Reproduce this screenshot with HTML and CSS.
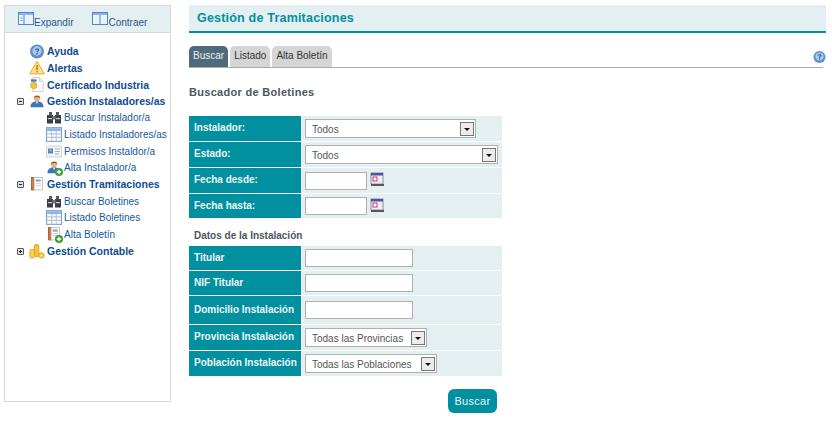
FILE: index.html
```html
<!DOCTYPE html>
<html lang="es">
<head>
<meta charset="utf-8">
<title>Gestión de Tramitaciones</title>
<link rel="stylesheet" href="styles.css">
</head>
<body>
<svg class="defs" width="0" height="0" aria-hidden="true">
  <defs>
    <symbol id="i-help" viewBox="0 0 14 14"><circle cx="7" cy="7" r="6.5" fill="#5d8fc9"/><circle cx="7" cy="6.5" r="4.4" fill="#a9c8ea"/><path d="M5 5.3c.3-1.6 4-1.6 4 .2 0 1.2-1.6 1.2-1.6 2.3H6.4c0-1.6 1.4-1.5 1.4-2.3 0-.6-1.3-.6-1.6 0z" fill="#2b5c9e"/><rect x="6.4" y="8.5" width="1.3" height="1.3" fill="#2b5c9e"/></symbol>
    <symbol id="i-alert" viewBox="0 0 16 14"><path d="M8 .8 15.4 13.4H.6z" fill="#ffe28a" stroke="#e9a83a"/><rect x="7.2" y="4.5" width="1.6" height="5" fill="#c9831c"/><rect x="7.2" y="10.3" width="1.6" height="1.6" fill="#c9831c"/></symbol>
    <symbol id="i-cert" viewBox="0 0 14 16"><path d="M2.500.5h7l4 4v11h-11z" fill="#fbfbfb" stroke="#cfcfcf"/><path d="M9.500.5v4h4" fill="#eee" stroke="#cfcfcf"/><rect x=".5" y="2.500" width="6" height="2.500" fill="#3d7ab8"/><circle cx="3.500" cy="9" r="3.400" fill="#f3c33c" stroke="#c8922a" stroke-width=".6"/></symbol>
    <symbol id="i-user" viewBox="0 0 16 16"><circle cx="8" cy="4.500" r="3.300" fill="#e9b184"/><path d="M4.600 4.200C4.700 1 11.300 1 11.400 4.200 9.500 3 6.500 3 4.600 4.200z" fill="#9c4f1f"/><path d="M1 14c0-4 3-6.200 7-6.200S15 10 15 14z" fill="#3a75c0"/><path d="M6.500 8h3L8 11z" fill="#f4d9c3"/></symbol>
    <symbol id="i-bino" viewBox="0 0 16 13"><rect x="1" y="4" width="6" height="8.500" fill="#3a3d42"/><rect x="9" y="4" width="6" height="8.500" fill="#3a3d42"/><rect x="3" y="1" width="3" height="3.500" fill="#55585e"/><rect x="10" y="1" width="3" height="3.500" fill="#55585e"/><rect x="6.500" y="5" width="3" height="3.500" fill="#777"/><rect x="2" y="7" width="4" height="1.200" fill="#c8ccd2"/><rect x="10" y="7" width="4" height="1.200" fill="#c8ccd2"/></symbol>
    <symbol id="i-list" viewBox="0 0 14 13"><rect x=".5" y=".5" width="13" height="12" fill="#fff" stroke="#7ba4d6"/><rect x="1" y="1" width="12" height="2.500" fill="#8db4e4"/><path d="M1 6h12M1 9h12M5 3.500v9M9 3.500v9" stroke="#b9c6d6"/></symbol>
    <symbol id="i-perm" viewBox="0 0 16 12"><rect x=".5" y=".5" width="15" height="11" fill="#f2f4f8" stroke="#d0d4dc"/><rect x="2" y="3" width="5" height="5" fill="#4e86cc"/><rect x="3.500" y="4" width="2" height="2" fill="#e8a070"/><path d="M9 3.500h5M9 6h5M9 8.500h4" stroke="#aab3c0"/></symbol>
    <symbol id="i-book" viewBox="0 0 14 18"><rect x=".5" y=".5" width="3" height="15" fill="#d9703a" stroke="#a84f20"/><rect x="3.500" y=".5" width="10" height="15" fill="#fdfdfd" stroke="#b9b9b9"/><rect x="5.500" y="3" width="6" height="2.500" fill="#7ba4d6"/><path d="M5.500 8h6M5.500 10.500h6" stroke="#c9c9c9"/></symbol>
    <symbol id="i-plus" viewBox="0 0 8 8"><circle cx="4" cy="4" r="4" fill="#3f9a3c"/><path d="M4 1.800v4.400M1.800 4h4.400" stroke="#fff" stroke-width="1.300"/></symbol>
    <symbol id="i-coins" viewBox="0 0 18 17"><rect x="6" y=".5" width="5" height="14" rx="2" fill="#f4c534" stroke="#d79e1e"/><rect x="1" y="6" width="5" height="10" rx="2" fill="#f7d558" stroke="#d79e1e"/><rect x="11" y="10" width="6" height="6" rx="2.500" fill="#f7d558" stroke="#d79e1e"/></symbol>
    <symbol id="i-cal" viewBox="0 0 14 14"><rect x="1" y="1" width="12" height="11" fill="#f1eef3" stroke="#8c8c96"/><rect x="1" y="1" width="12" height="2.500" fill="#4a55a8"/><rect x="3" y="5" width="4" height="4" fill="#fff" stroke="#c8387c"/><rect x="1" y="12" width="13" height="2" fill="#55585c"/></symbol>
    <symbol id="i-panel" viewBox="0 0 16 13"><rect x=".5" y=".5" width="15" height="12" fill="#eaf2fb" stroke="#4f86c6"/><rect x="1" y="1" width="14" height="2" fill="#8db4e4"/><path d="M6 3v9" stroke="#4f86c6"/><path d="M2.500 6h2M2.500 8.500h2" stroke="#8a98a8"/></symbol>
    <symbol id="i-book2" viewBox="0 0 16 13"><rect x=".5" y=".5" width="15" height="12" fill="#eaf2fb" stroke="#4f86c6"/><rect x="1" y="1" width="14" height="2" fill="#8db4e4"/><path d="M8 3v9" stroke="#4f86c6"/></symbol>
  </defs>
</svg>

<div class="page">
  <aside class="side">
    <div class="side-head">
      <a class="head-link"><svg class="ic-panel"><use href="#i-panel"/></svg><span>Expandir</span></a>
      <a class="head-link"><svg class="ic-panel"><use href="#i-book2"/></svg><span>Contraer</span></a>
    </div>
    <ul class="tree">
      <li class="node"><span class="tog"></span><svg class="ic"><use href="#i-help"/></svg><b>Ayuda</b></li>
      <li class="node"><span class="tog"></span><svg class="ic"><use href="#i-alert"/></svg><b>Alertas</b></li>
      <li class="node"><span class="tog"></span><svg class="ic"><use href="#i-cert"/></svg><b>Certificado Industria</b></li>
      <li class="node"><span class="tog minus"></span><svg class="ic"><use href="#i-user"/></svg><b>Gestión Instaladores/as</b></li>
      <li class="leaf"><svg class="ic"><use href="#i-bino"/></svg><span>Buscar Instalador/a</span></li>
      <li class="leaf"><svg class="ic"><use href="#i-list"/></svg><span>Listado Instaladores/as</span></li>
      <li class="leaf"><svg class="ic"><use href="#i-perm"/></svg><span>Permisos Instaldor/a</span></li>
      <li class="leaf"><span class="stack"><svg class="ic"><use href="#i-user"/></svg><svg class="badge"><use href="#i-plus"/></svg></span><span>Alta Instalador/a</span></li>
      <li class="node"><span class="tog minus"></span><svg class="ic"><use href="#i-book"/></svg><b>Gestión Tramitaciones</b></li>
      <li class="leaf"><svg class="ic"><use href="#i-bino"/></svg><span>Buscar Boletines</span></li>
      <li class="leaf"><svg class="ic"><use href="#i-list"/></svg><span>Listado Boletines</span></li>
      <li class="leaf"><span class="stack"><svg class="ic"><use href="#i-book"/></svg><svg class="badge"><use href="#i-plus"/></svg></span><span>Alta Boletín</span></li>
      <li class="node"><span class="tog plus"></span><svg class="ic"><use href="#i-coins"/></svg><b>Gestión Contable</b></li>
    </ul>
  </aside>

  <main class="main">
    <h1 class="title">Gestión de Tramitaciones</h1>
    <div class="tabs">
      <a class="tab active">Buscar</a>
      <a class="tab">Listado</a>
      <a class="tab">Alta Boletín</a>
      <svg class="tabs-help"><use href="#i-help"/></svg>
    </div>
    <h2 class="subtitle">Buscador de Boletines</h2>

    <div class="form">
      <div class="row h26"><label>Instalador:</label><div class="val"><div class="sel w171"><span>Todos</span><i></i></div></div></div>
      <div class="row h26"><label>Estado:</label><div class="val"><div class="sel w193"><span>Todos</span><i></i></div></div></div>
      <div class="row h25"><label>Fecha desde:</label><div class="val"><input class="inp w62" type="text"><svg class="cal"><use href="#i-cal"/></svg></div></div>
      <div class="row h24"><label>Fecha hasta:</label><div class="val"><input class="inp w62" type="text"><svg class="cal"><use href="#i-cal"/></svg></div></div>
    </div>

    <h3 class="section">Datos de la Instalación</h3>

    <div class="form">
      <div class="row h24"><label>Titular</label><div class="val"><input class="inp w108" type="text"></div></div>
      <div class="row h24"><label>NIF Titular</label><div class="val"><input class="inp w108" type="text"></div></div>
      <div class="row h28"><label>Domicilio Instalación</label><div class="val"><input class="inp w108" type="text"></div></div>
      <div class="row h25"><label>Provincia Instalación</label><div class="val"><div class="sel w122"><span>Todas las Provincias</span><i></i></div></div></div>
      <div class="row h25"><label>Población Instalación</label><div class="val"><div class="sel w132"><span>Todas las Poblaciones</span><i></i></div></div></div>
    </div>

    <div class="actions"><button class="btn" type="button">Buscar</button></div>
  </main>
</div>
</body>
</html>
```

FILE: styles.css
```css
* { box-sizing: border-box; }
html, body { margin: 0; padding: 0; background: #fff; }
body { font-family: "Liberation Sans", Arial, sans-serif; font-size: 10px; color: #333; overflow: hidden; }
.defs { display: block; height: 0; }

.page { display: flex; align-items: flex-start; gap: 18px; padding: 5px 6px 0 4px; }

.side { width: 167px; height: 397px; flex: none; border: 1px solid #d5d9dc; }
.side-head { height: 27px; background: #e4eff1; border-bottom: 1px solid #d5d9dc; display: flex; gap: 19px; padding: 6px 0 0 13px; }
.head-link { display: flex; align-items: flex-start; color: #2a5a8c; font-size: 10px; }
.head-link span { margin-top: 5px; margin-left: 0; }
.ic-panel { width: 16px; height: 13px; margin-right: 0; }

.tree { list-style: none; margin: 0; padding: 10px 0 0 12px; }
.node, .leaf { display: flex; align-items: center; height: 16.650px; }
.node b { font-size: 10.500px; color: #0f4c92; margin-left: 0; white-space: nowrap; }
.leaf { padding-left: 29px; }
.leaf span:last-child { color: #17589c; font-size: 10px; white-space: nowrap; }
.leaf .ic { margin-right: 2px; }
.stack { position: relative; display: flex; width: 18px; flex: none; }
.stack .ic { margin: 0; }
.badge { position: absolute; right: 1px; bottom: -1px; width: 8px; height: 8px; }
.ic { width: 16px; height: 15px; flex: none; margin-right: 2px; }
.leaf > .ic { margin-right: 2px; }
.tog { position: relative; width: 7px; height: 7px; flex: none; margin-right: 5px; margin-left: 0; border-radius: 1px; }
.tog.minus, .tog.plus { border: 1px solid #555; background: #dfe5ea; }
.tog.minus::after, .tog.plus::after { content: ""; position: absolute; left: 1px; top: 2px; width: 3px; height: 1px; background: #222; }
.tog.plus::before { content: ""; position: absolute; left: 2px; top: 1px; width: 1px; height: 3px; background: #222; }

.main { flex: 1; min-width: 0; }
.title { margin: 0; height: 28px; background: #e4eff1; border-bottom: 2px solid #00909f; color: #00909f; font-size: 12.500px; font-weight: bold; line-height: 26px; padding-left: 8px; letter-spacing: .2px; }

.tabs { display: flex; align-items: flex-end; gap: 2px; height: 22px; margin-top: 13px; margin-right: 3px; border-bottom: 1px solid #a8adb3; position: relative; }
.tab { height: 21px; padding: 0 4px; line-height: 20px; font-size: 10px; background: #d5d5d5; color: #333; border-radius: 5px 5px 0 0; }
.tab.active { background: #4f6a78; color: #e8eef2; }
.tabs-help { position: absolute; right: -3px; top: 4px; width: 13px; height: 14px; }

.subtitle { margin: 18px 0 0; font-size: 11px; font-weight: bold; color: #4c5660; letter-spacing: .3px; line-height: 13px; }

.form { width: 313px; display: flex; flex-direction: column; gap: 1px; }
.subtitle + .form { margin-top: 17px; }
.row { display: flex; gap: 1px; background: #fff; }
.row label { width: 112px; flex: none; background: #00909f; color: #eef6f7; font-size: 10px; font-weight: bold; padding-left: 5px; display: flex; align-items: center; white-space: nowrap; padding-bottom: 2px; }
.val { flex: 1; background: #e4eff1; display: flex; align-items: center; padding-left: 3px; }
.h24 { height: 24px; } .h25 { height: 25px; } .h26 { height: 25px; } .h28 { height: 28px; }

.inp { height: 18px; border: 1px solid #b0b0b0; background: #fff; padding: 0; outline: 0; display: block; }
.w62 { width: 62px; } .w108 { width: 108px; }
.cal { width: 14px; height: 14px; margin-left: 3px; margin-top: -3px; }

.sel { display: flex; align-items: center; justify-content: space-between; height: 19px; border: 1px solid #b0b0b0; background: #fff; padding: 0 1px 0 6px; font-size: 10px; color: #555; }
.sel span { white-space: nowrap; margin-top: 1px; }
.sel i { position: relative; display: block; width: 14px; height: 14px; border: 1px solid #777; background: #ececec; flex: none; }
.sel i::after { content: ""; position: absolute; left: 3px; top: 5px; border: 3px solid transparent; border-top: 3px solid #111; border-bottom: 0; }
.w171 { width: 171px; } .w193 { width: 193px; } .w122 { width: 122px; } .w132 { width: 132px; }

.section { margin: 11px 0 4px 5px; font-size: 10px; font-weight: bold; color: #4c5660; line-height: 13px; }

.actions { width: 308px; display: flex; justify-content: flex-end; margin-top: 13px; }
.btn { width: 49px; height: 24px; padding: 0; border: 0; border-radius: 6px; background: #00909f; color: #e8f4f5; font-family: inherit; font-size: 11px; letter-spacing: .3px; }
```
